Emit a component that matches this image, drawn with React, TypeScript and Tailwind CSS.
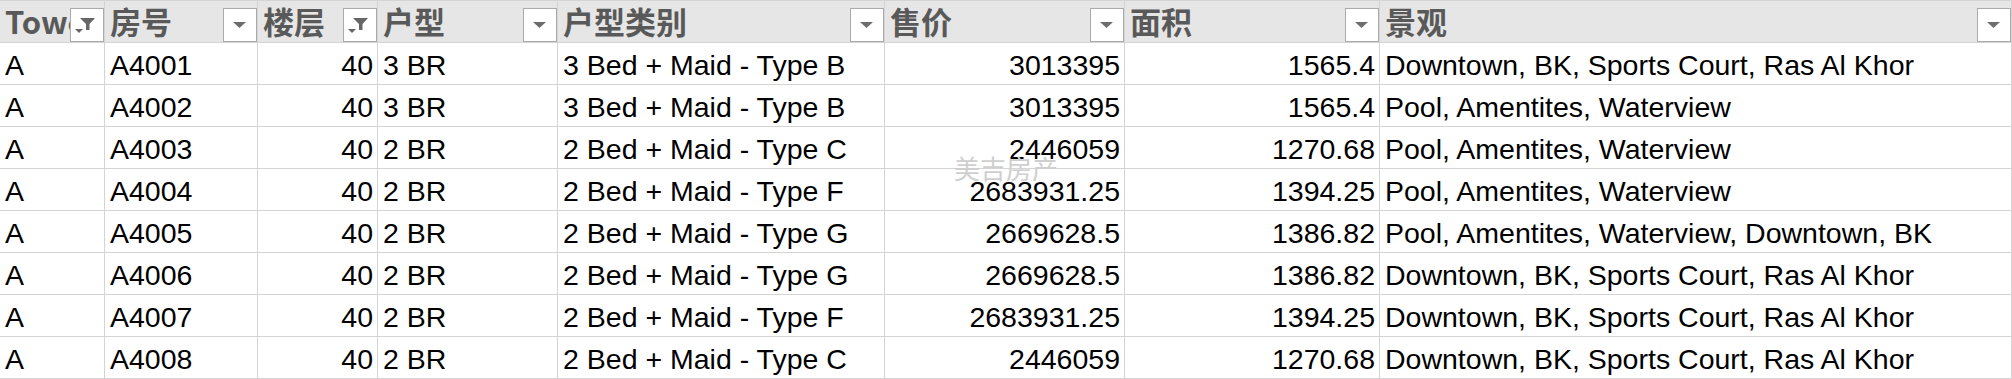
import React from 'react';

type Col = { title: string; filtered?: boolean; align: 'left' | 'right' };

const columns: Col[] = [
  { title: 'Tower', filtered: true, align: 'left' },
  { title: '房号', align: 'left' },
  { title: '楼层', filtered: true, align: 'right' },
  { title: '户型', align: 'left' },
  { title: '户型类别', align: 'left' },
  { title: '售价', align: 'right' },
  { title: '面积', align: 'right' },
  { title: '景观', align: 'left' },
];

const rows: string[][] = [
  ['A', 'A4001', '40', '3 BR', '3 Bed + Maid - Type B', '3013395', '1565.4', 'Downtown, BK, Sports Court, Ras Al Khor'],
  ['A', 'A4002', '40', '3 BR', '3 Bed + Maid - Type B', '3013395', '1565.4', 'Pool, Amentites, Waterview'],
  ['A', 'A4003', '40', '2 BR', '2 Bed + Maid - Type C', '2446059', '1270.68', 'Pool, Amentites, Waterview'],
  ['A', 'A4004', '40', '2 BR', '2 Bed + Maid - Type F', '2683931.25', '1394.25', 'Pool, Amentites, Waterview'],
  ['A', 'A4005', '40', '2 BR', '2 Bed + Maid - Type G', '2669628.5', '1386.82', 'Pool, Amentites, Waterview, Downtown, BK'],
  ['A', 'A4006', '40', '2 BR', '2 Bed + Maid - Type G', '2669628.5', '1386.82', 'Downtown, BK, Sports Court, Ras Al Khor'],
  ['A', 'A4007', '40', '2 BR', '2 Bed + Maid - Type F', '2683931.25', '1394.25', 'Downtown, BK, Sports Court, Ras Al Khor'],
  ['A', 'A4008', '40', '2 BR', '2 Bed + Maid - Type C', '2446059', '1270.68', 'Downtown, BK, Sports Court, Ras Al Khor'],
];

function FilterButton({ filtered }: { filtered?: boolean }) {
  return (
    <div className="absolute right-0 bottom-0 h-[34px] w-[34px] border border-[#ababab] bg-white">
      <svg width="32" height="32" viewBox="0 0 32 32" className="block">
        {filtered ? (
          <>
            <polygon points="9,9 24,9 18.5,15 18.5,21 15,21 15,15" fill="#666" />
            <polygon points="4,20 12,20 8,24" fill="#666" />
          </>
        ) : (
          <polygon points="9,13 22,13 15.5,19" fill="#6d6d6d" />
        )}
      </svg>
    </div>
  );
}

export default function App() {
  return (
    <div className="relative w-[2012px] h-[379px] overflow-hidden bg-white">
      <div className="grid grid-cols-[105px_153px_120px_180px_327px_240px_255px_632px] font-['Liberation_Sans','Noto_Sans_CJK_SC',sans-serif]">
        {columns.map((c) => (
          <div
            key={c.title}
            className="relative h-[43px] border-t border-b border-r border-[#d4d4d4] bg-[#e7e6e6] pl-[5px] font-['Noto_Sans_CJK_SC',sans-serif] text-[31px] font-bold leading-[40px] text-[#595959] whitespace-nowrap"
          >
            {c.title}
            <FilterButton filtered={c.filtered} />
          </div>
        ))}
        {rows.map((r, i) =>
          r.map((v, j) => (
            <div
              key={`${i}-${j}`}
              className={
                'h-[42px] overflow-hidden whitespace-nowrap border-b border-r border-[#d4d4d4] pt-[3px] text-[28.5px] leading-[38px] text-black ' +
                (columns[j].align === 'right' ? 'pr-[4px] text-right' : 'pl-[5px]')
              }
            >
              {v}
            </div>
          )),
        )}
      </div>
      <div className="pointer-events-none absolute left-[954px] top-[151px] font-['Noto_Sans_CJK_SC',sans-serif] text-[26px] leading-[34px] text-[#cfcfcf]">
        美吉房产
      </div>
    </div>
  );
}
